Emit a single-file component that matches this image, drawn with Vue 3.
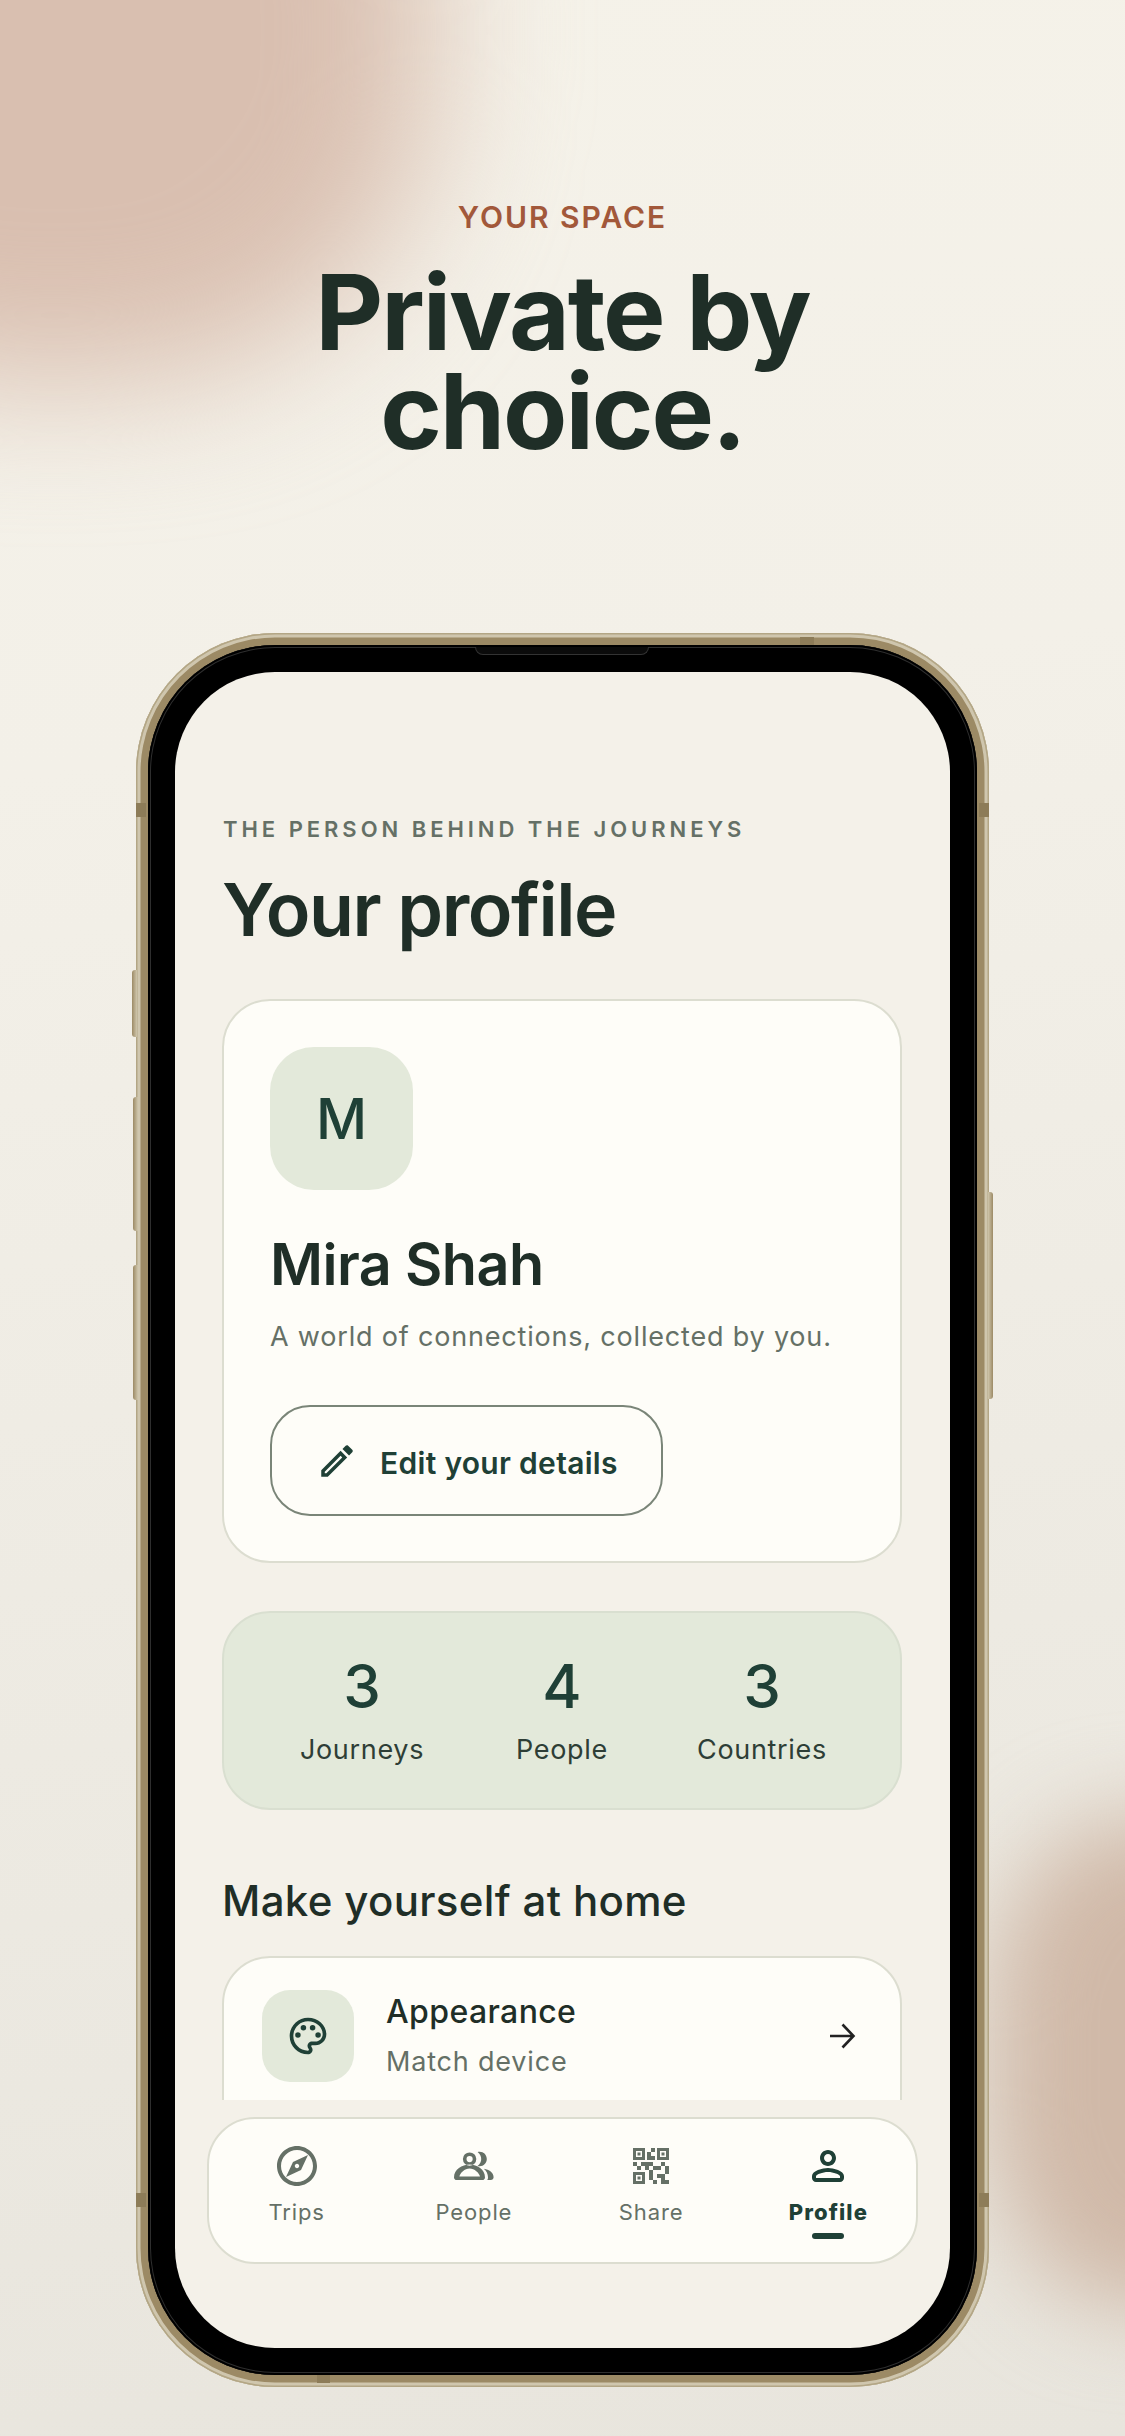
<script setup>
const stats = [
  { value: 3, label: 'Journeys' },
  { value: 4, label: 'People' },
  { value: 3, label: 'Countries' },
]
const navItems = [
  { key: 'trips', label: 'Trips' },
  { key: 'people', label: 'People' },
  { key: 'share', label: 'Share' },
  { key: 'profile', label: 'Profile', active: true },
]
</script>

<template>
  <main class="page">
    <div class="glow glow-top" aria-hidden="true"></div>
    <div class="glow glow-bottom" aria-hidden="true"></div>

    <header class="hero">
      <p class="hero-kicker">YOUR SPACE</p>
      <h1 class="hero-title">Private by<br />choice.</h1>
    </header>

    <div class="phone">
      <span class="btn-side btn-mute"></span>
      <span class="btn-side btn-up"></span>
      <span class="btn-side btn-down"></span>
      <span class="btn-side btn-power"></span>
      <span class="band band-top"></span>
      <span class="band band-bottom"></span>
      <span class="band band-l1"></span>
      <span class="band band-l2"></span>
      <span class="band band-r1"></span>
      <span class="band band-r2"></span>

      <div class="bezel">
        <span class="notch"></span>
        <div class="screen">
          <div class="scroll">
            <p class="eyebrow">THE PERSON BEHIND THE JOURNEYS</p>
            <h2 class="page-title">Your profile</h2>

            <section class="card profile">
              <div class="avatar">M</div>
              <h3 class="name">Mira Shah</h3>
              <p class="tagline">A world of connections, collected by you.</p>
              <button class="edit" type="button">
                <svg class="edit-icon" viewBox="0 0 24 24" aria-hidden="true">
                  <path d="M3 17.25V21h3.75L17.81 9.94l-3.75-3.75L3 17.25zM5.92 19H5v-.92l9.06-9.06.92.92L5.92 19zM20.71 7.04c.39-.39.39-1.02 0-1.41l-2.34-2.34c-.2-.2-.45-.29-.71-.29s-.51.1-.7.29l-1.83 1.83 3.75 3.75 1.83-1.83z" />
                </svg>
                <span class="edit-label">Edit your details</span>
              </button>
            </section>

            <section class="stats">
              <div v-for="stat in stats" :key="stat.label" class="stat">
                <strong class="stat-value">{{ stat.value }}</strong>
                <span class="stat-label">{{ stat.label }}</span>
              </div>
            </section>

            <h3 class="section-title">Make yourself at home</h3>

            <section class="card list">
              <div class="row">
                <div class="row-tile">
                  <svg class="row-icon" viewBox="0 0 24 24" aria-hidden="true">
                    <path d="M12 22C6.49 22 2 17.51 2 12S6.49 2 12 2s10 4.04 10 9c0 3.31-2.69 6-6 6h-1.77c-.28 0-.5.22-.5.5 0 .12.05.23.13.33.41.47.64 1.06.64 1.67 0 1.38-1.12 2.5-2.5 2.5zm0-18c-4.41 0-8 3.59-8 8s3.59 8 8 8c.28 0 .5-.22.5-.5 0-.16-.08-.28-.14-.35-.41-.46-.63-1.05-.63-1.65 0-1.38 1.12-2.5 2.5-2.5H16c2.21 0 4-1.79 4-4 0-3.86-3.59-7-8-7z" />
                    <circle cx="6.5" cy="11.5" r="1.5" />
                    <circle cx="9.5" cy="7.5" r="1.5" />
                    <circle cx="14.5" cy="7.5" r="1.5" />
                    <circle cx="17.5" cy="11.5" r="1.5" />
                  </svg>
                </div>
                <div class="row-text">
                  <span class="row-title">Appearance</span>
                  <span class="row-sub">Match device</span>
                </div>
                <svg class="row-arrow" viewBox="0 0 28 28" aria-hidden="true">
                  <path d="M2 14h23M14.5 2.5 25.5 14 14.5 25.5" />
                </svg>
              </div>
            </section>
          </div>

          <nav class="nav">
            <div v-for="item in navItems" :key="item.key" class="nav-item" :class="{ active: item.active }">
              <svg class="nav-icon" viewBox="0 0 24 24" aria-hidden="true">
                <path v-if="item.key === 'trips'" d="M12 2C6.48 2 2 6.48 2 12s4.48 10 10 10 10-4.48 10-10S17.52 2 12 2zm0 18c-4.41 0-8-3.59-8-8s3.59-8 8-8 8 3.59 8 8-3.59 8-8 8zm-5.5-2.5l7.51-3.49L17.5 6.5 9.99 9.99 6.5 17.5zm5.5-6.6c.61 0 1.1.49 1.1 1.1s-.49 1.1-1.1 1.1-1.1-.49-1.1-1.1.49-1.1 1.1-1.1z" />
                <path v-else-if="item.key === 'people'" fill-rule="evenodd" d="M9.8 5.2a3.35 3.35 0 1 1 0 6.7 3.35 3.35 0 0 1 0-6.7zM9.8 7a1.55 1.55 0 1 0 0 3.1 1.55 1.55 0 0 0 0-3.1zM3.3 19C2.6 19 2 18.4 2 17.7 2 13.6 6 11.2 9.8 11.2c3.8 0 7.7 2.4 7.7 6.5 0 .7-.6 1.3-1.3 1.3zM4.7 17.2H15c-.5-1.7-2.7-3.9-5.2-3.9s-4.6 2.2-5.1 3.9zM13.8 5c2.6-.6 4.6 1.2 4.6 3.5s-2 4.1-4.6 3.5c1.4-1.2 1.8-2.4 1.8-3.5S15.2 6.2 13.8 5zM16.9 13.4c2.7.4 4.9 1.9 4.9 4.2 0 .8-.6 1.4-1.4 1.4h-1.8c.3-.4.4-.8.4-1.3 0-1.7-.8-3.2-2.1-4.3z" />
                <path v-else-if="item.key === 'share'" d="M15 21h-2v-2h2v2zM13 14h-2v5h2v-5zM21 12h-2v4h2v-4zM19 10h-2v2h2v-2zM7 12H5v2h2v-2zM5 10H3v2h2v-2zM12 5h2V3h-2v2zM4.5 4.5v3h3v-3h-3zM9 9H3V3h6v6zM4.5 16.5v3h3v-3h-3zM9 21H3v-6h6v6zM16.5 4.5v3h3v-3h-3zM21 9h-6V3h6v6zM19 19v-3h-4v2h2v3h4v-2h-2zM17 12h-4v2h4v-2zM13 10H7v2h2v2h2v-2h2v-2zM14 9V7h-2V5h-2v4h4zM6.75 5.25h-1.5v1.5h1.5v-1.5zM6.75 17.25h-1.5v1.5h1.5v-1.5zM18.75 5.25h-1.5v1.5h1.5v-1.5z" />
                <path v-else d="M12 6c1.1 0 2 .9 2 2s-.9 2-2 2-2-.9-2-2 .9-2 2-2m0 9c2.7 0 5.8 1.29 6 2.01V18H6v-.99c.2-.72 3.3-2.01 6-2.01m0-11C9.79 4 8 5.79 8 8s1.79 4 4 4 4-1.79 4-4-1.79-4-4-4zm0 9c-2.67 0-8 1.34-8 4v1c0 1.1.9 2 2 2h12c1.1 0 2-.9 2-2v-1c0-2.66-5.33-4-8-4z" />
              </svg>
              <span class="nav-label">{{ item.label }}</span>
              <span v-if="item.active" class="nav-mark"></span>
            </div>
          </nav>
        </div>
      </div>
    </div>
  </main>
</template>

<style>
html, body { margin: 0; background: #eeebe3; }
</style>

<style scoped>
* { box-sizing: border-box; }
.page {
  position: relative;
  width: 1125px;
  height: 2436px;
  overflow: hidden;
  font-family: Inter, "Liberation Sans", sans-serif;
  background: linear-gradient(172deg, #f5f2e9 0%, #f3f0e8 30%, #efece4 55%, #e8e5dd 100%);
  color: #1f2e27;
}
.glow { position: absolute; filter: blur(70px); pointer-events: none; }
.glow-top {
  left: -320px; top: -320px; width: 750px; height: 700px;
  background: #d9bfb0; border-radius: 42%;
}
.glow-bottom {
  left: 990px; top: 1818px; width: 360px; height: 490px;
  background: #d0b9a8; border-radius: 40%;
  filter: blur(46px);
}
.hero {
  position: relative;
  padding-top: 200px;
  text-align: center;
  height: 633px;
}
.hero-kicker {
  margin: 0;
  font-size: 30px;
  line-height: 34px;
  font-weight: 600;
  letter-spacing: 0.065em;
  color: #a2583a;
}
.hero-title {
  margin: 28px 0 0;
  font-size: 105px;
  line-height: 99px;
  font-weight: 700;
  letter-spacing: -0.02em;
  color: #1f2e27;
}
.phone {
  position: relative;
  width: 853px;
  height: 1754px;
  margin: 0 auto;
  padding: 12px;
  border-radius: 139px;
  background: #9c8a65;
  box-shadow: inset 0 0 0 1.5px #b3a685, inset 0 0 0 4.5px #cfc6ae;
}
.btn-side {
  position: absolute;
  width: 5px;
  background: linear-gradient(90deg, #9c8a65, #cfc6ac);
  border-radius: 3px 0 0 3px;
}
.btn-mute { left: -4px; top: 337px; height: 67px; }
.btn-up { left: -3px; top: 464px; height: 134px; }
.btn-down { left: -3px; top: 632px; height: 135px; }
.btn-power {
  right: -4px; top: 559px; height: 207px;
  border-radius: 0 3px 3px 0;
  background: linear-gradient(270deg, #9c8a65, #cfc6ac);
}
.band { position: absolute; background: #8d7c58; }
.band-top { left: 664px; top: 4px; width: 14px; height: 8px; }
.band-bottom { left: 181px; bottom: 4px; width: 13px; height: 8px; }
.band-l1 { left: 0; top: 170px; width: 10px; height: 14px; }
.band-l2 { left: 0; top: 1560px; width: 10px; height: 14px; }
.band-r1 { right: 0; top: 170px; width: 10px; height: 14px; }
.band-r2 { right: 0; top: 1560px; width: 10px; height: 14px; }
.bezel {
  position: relative;
  height: 100%;
  padding: 27px;
  border-radius: 127px;
  background: #000;
  box-shadow: inset 0 0 0 2px #000, inset 0 0 0 3px #2e2e2e;
}
.notch {
  position: absolute;
  left: 327px;
  top: 2px;
  width: 174px;
  height: 8px;
  background: #0b0b0b;
  border: 1px solid #333;
  border-top: 0;
  border-radius: 0 0 8px 8px;
}
.screen {
  height: 100%;
  border-radius: 100px;
  background: #f4f1e9;
  overflow: hidden;
}
.scroll {
  height: 1428px;
  overflow: hidden;
  padding: 143px 48px 0 47px;
}
.eyebrow {
  margin: 0 0 0 1px;
  font-size: 22px;
  line-height: 28px;
  font-weight: 600;
  letter-spacing: 0.18em;
  color: #657066;
}
.page-title {
  margin: 24px 0 0;
  font-size: 73.5px;
  line-height: 86px;
  font-weight: 600;
  letter-spacing: -0.02em;
  color: #1f2e27;
}
.card {
  background: #fefdf8;
  border: 2px solid #dcddd0;
  border-radius: 48px;
}
.profile {
  margin-top: 46px;
  height: 564px;
  padding: 46px;
}
.avatar {
  width: 143px;
  height: 143px;
  display: flex;
  align-items: center;
  justify-content: center;
  border-radius: 44px;
  background: #e3e9da;
  font-size: 56px;
  font-weight: 500;
  color: #1f4036;
}
.name {
  margin: 39px 0 0;
  font-size: 57.5px;
  line-height: 70px;
  font-weight: 600;
  letter-spacing: -0.01em;
  color: #1f2e27;
}
.tagline {
  margin: 20px 0 0;
  font-size: 27px;
  line-height: 36px;
  letter-spacing: 0.03em;
  color: #657066;
}
.edit {
  display: flex;
  align-items: center;
  gap: 22px;
  width: 393px;
  height: 111px;
  margin-top: 50px;
  padding: 0 0 0 44px;
  background: transparent;
  border: 2px solid #7a8578;
  border-radius: 40px;
  font: 600 30px Inter, "Liberation Sans", sans-serif;
  letter-spacing: 0.01em;
  color: #1f4036;
}
.edit-label { padding-top: 5px; }
.edit-icon { width: 42px; height: 42px; fill: #1f4036; flex: none; }
.stats {
  display: grid;
  grid-template-columns: repeat(3, 200px);
  justify-content: center;
  align-items: center;
  height: 199px;
  margin-top: 48px;
  background: #e3e9da;
  border: 2px solid #d9dfd0;
  border-radius: 48px;
}
.stat { display: flex; flex-direction: column; align-items: center; gap: 12px; padding-bottom: 3px; }
.stat-value { font-size: 60px; line-height: 70px; font-weight: 500; color: #1f4036; }
.stat-label { font-size: 27px; line-height: 34px; letter-spacing: 0.025em; color: #2e3e36; }
.section-title {
  margin: 63px 0 0;
  font-size: 42px;
  line-height: 56px;
  font-weight: 500;
  letter-spacing: 0.008em;
  color: #1f2e27;
}
.list {
  margin-top: 27px;
  height: 320px;
}
.row {
  display: flex;
  align-items: center;
  height: 156px;
  padding: 0 44px 0 38px;
}
.row-tile {
  width: 92px;
  height: 92px;
  display: flex;
  align-items: center;
  justify-content: center;
  flex: none;
  border-radius: 28px;
  background: #e3e9da;
}
.row-icon { width: 44px; height: 44px; fill: #1f4036; }
.row-text { display: flex; flex-direction: column; gap: 13px; margin-left: 32px; padding-bottom: 1px; flex: 1; }
.row-title { font-size: 32px; line-height: 40px; font-weight: 500; letter-spacing: 0.012em; color: #1f2e27; }
.row-sub { font-size: 27px; line-height: 34px; letter-spacing: 0.03em; color: #657066; }
.row-arrow { width: 28px; height: 28px; fill: none; stroke: #222; stroke-width: 2.6; }
.nav {
  display: grid;
  grid-template-columns: repeat(4, 177.25px);
  justify-content: center;
  width: 711px;
  height: 147px;
  margin: 17px 0 0 32px;
  background: #fefdf8;
  border: 2px solid #dcddd0;
  border-radius: 48px;
}
.nav-item {
  position: relative;
  display: flex;
  flex-direction: column;
  align-items: center;
  padding-top: 23px;
  color: #657066;
}
.nav-icon { width: 48px; height: 48px; fill: currentColor; }
.nav-label {
  margin-top: 7px;
  font-size: 22px;
  line-height: 30px;
  letter-spacing: 0.04em;
}
.nav-item.active { color: #1f4036; }
.nav-item.active .nav-label { font-weight: 800; letter-spacing: 0.05em; }
.nav-mark {
  position: absolute;
  top: 114px;
  width: 32px;
  height: 6px;
  border-radius: 3px;
  background: #1f4036;
}
</style>
